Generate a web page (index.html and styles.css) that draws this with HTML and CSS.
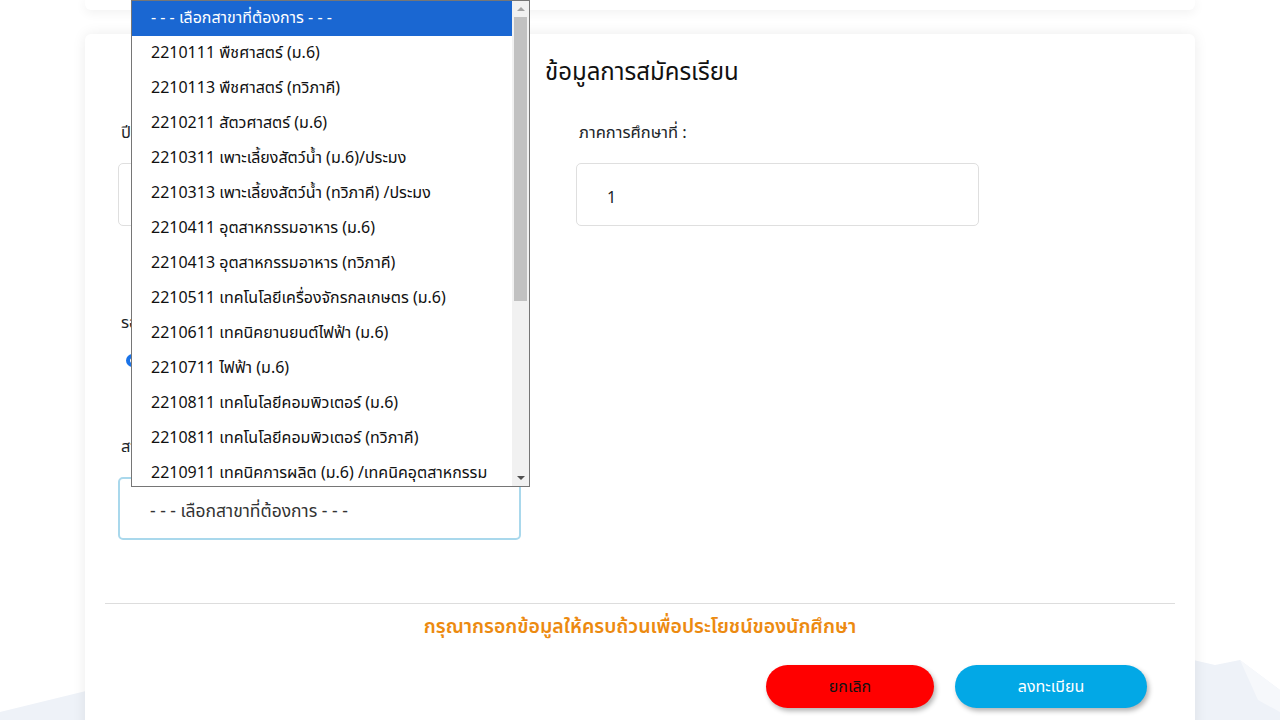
FILE: index.html
```html
<!DOCTYPE html>
<html lang="th">
<head>
<meta charset="utf-8">
<title>ข้อมูลการสมัครเรียน</title>
<link rel="stylesheet" href="styles.css">
</head>
<body>
<svg class="bg-mountains" width="1280" height="720" viewBox="0 0 1280 720" aria-hidden="true">
  <polygon points="0,720 0,712 90,690 160,680 160,720" fill="#eef2f8"/>
  <polygon points="1150,720 1150,650 1215,665 1240,660 1280,690 1280,720" fill="#eef2f8"/>
  <polygon points="1240,660 1258,700 1280,712 1280,690" fill="#f6f8fb"/>
</svg>
<div class="page">
  <div class="top-card"></div>
  <div class="card">
    <div class="cols">
      <div class="col col-left">
        <div class="heading-space"></div>
        <div class="field">
          <label class="label">ปีการศึกษา :</label>
          <div class="input"></div>
        </div>
        <div class="field field-round">
          <label class="label">รอบการสมัคร :</label>
          <div class="radio-row"><span class="radio"></span></div>
        </div>
        <div class="field field-major">
          <label class="label">สาขาวิชา :</label>
          <div class="input select-focus">- - - เลือกสาขาที่ต้องการ - - -</div>
        </div>
      </div>
      <div class="col col-right">
        <h2 class="heading">ข้อมูลการสมัครเรียน</h2>
        <div class="field field-indent">
          <label class="label">ภาคการศึกษาที่ :</label>
          <div class="input">1</div>
        </div>
      </div>
    </div>
    <hr class="divider">
    <p class="notice">กรุณากรอกข้อมูลให้ครบถ้วนเพื่อประโยชน์ของนักศึกษา</p>
    <div class="actions">
      <button class="btn btn-cancel">ยกเลิก</button>
      <button class="btn btn-submit">ลงทะเบียน</button>
    </div>
  </div>
</div>

<div class="dropdown">
  <ul class="options">
    <li class="opt selected">- - - เลือกสาขาที่ต้องการ - - -</li>
    <li class="opt">2210111 พืชศาสตร์ (ม.6)</li>
    <li class="opt">2210113 พืชศาสตร์ (ทวิภาคี)</li>
    <li class="opt">2210211 สัตวศาสตร์ (ม.6)</li>
    <li class="opt">2210311 เพาะเลี้ยงสัตว์น้ำ (ม.6)/ประมง</li>
    <li class="opt">2210313 เพาะเลี้ยงสัตว์น้ำ (ทวิภาคี) /ประมง</li>
    <li class="opt">2210411 อุตสาหกรรมอาหาร (ม.6)</li>
    <li class="opt">2210413 อุตสาหกรรมอาหาร (ทวิภาคี)</li>
    <li class="opt">2210511 เทคโนโลยีเครื่องจักรกลเกษตร (ม.6)</li>
    <li class="opt">2210611 เทคนิคยานยนต์ไฟฟ้า (ม.6)</li>
    <li class="opt">2210711 ไฟฟ้า (ม.6)</li>
    <li class="opt">2210811 เทคโนโลยีคอมพิวเตอร์ (ม.6)</li>
    <li class="opt">2210811 เทคโนโลยีคอมพิวเตอร์ (ทวิภาคี)</li>
    <li class="opt">2210911 เทคนิคการผลิต (ม.6) /เทคนิคอุตสาหกรรม</li>
  </ul>
  <div class="scrollbar">
    <span class="arrow arrow-up"></span>
    <span class="thumb"></span>
    <span class="arrow arrow-down"></span>
  </div>
</div>
</body>
</html>
```

FILE: styles.css
```css
* { box-sizing: border-box; }
html, body { margin: 0; padding: 0; }
body {
  width: 1280px;
  height: 720px;
  overflow: hidden;
  position: relative;
  background: #ffffff;
  font-family: "Noto Sans Thai", "Noto Sans", "DejaVu Sans", sans-serif;
  color: #212529;
}
.bg-mountains {
  position: absolute;
  left: 0;
  top: 0;
  z-index: 0;
}
.page {
  position: relative;
  z-index: 1;
  width: 1110px;
  margin: 0 auto;
}
.top-card {
  height: 10px;
  background: #fff;
  border-radius: 0 0 6px 6px;
  box-shadow: 0 2px 12px rgba(0,0,0,0.07);
}
.card {
  margin-top: 24px;
  height: 720px;
  background: #fff;
  border-radius: 6px;
  box-shadow: 0 0 14px rgba(0,0,0,0.08);
  padding: 0 20px;
}
.cols {
  display: flex;
}
.col-left { width: 440px; padding-left: 13px; }
.col-right { flex: 1; }
.heading-space { height: 88px; }
.heading {
  margin: 0;
  padding-top: 21px;
  height: 88px;
  font-size: 24px;
  font-weight: 400;
  line-height: 36px;
  color: #111;
}
.label {
  display: block;
  font-size: 16.5px;
  line-height: 22px;
  margin-left: 3px;
  color: #212529;
}
.field-indent { padding-left: 31px; }
.input {
  margin-top: 19px;
  width: 403px;
  height: 63px;
  border: 1px solid #dfdfdf;
  border-radius: 5px;
  padding: 6px 30px 0;
  display: flex;
  align-items: center;
  font-size: 16px;
  color: #212529;
}
.field-round { margin-top: 86px; }
.radio-row {
  display: flex;
  align-items: center;
  margin-top: 18px;
  margin-left: 8px;
  height: 16px;
}
.radio {
  width: 13px;
  height: 13px;
  border-radius: 50%;
  border: 4px solid #1a73e8;
}
.field-major { margin-top: 68px; }
.select-focus {
  border-color: #a9d8ec;
  border-width: 2px;
  color: #333;
  font-size: 17.5px;
}
.divider {
  margin: 63px 0 0 0;
  border: 0;
  border-top: 1px solid #dddddd;
}
.notice {
  margin: 10px 0 0 0;
  text-align: center;
  font-size: 19.5px;
  font-weight: 600;
  line-height: 26px;
  color: #ec8a10;
}
.actions {
  display: flex;
  justify-content: flex-end;
  gap: 21px;
  margin-top: 25px;
  padding-right: 28px;
}
.btn {
  height: 43px;
  border: 0;
  border-radius: 22px;
  font-family: inherit;
  font-size: 16px;
  box-shadow: 2px 3px 5px rgba(0,0,0,0.3);
}
.btn-cancel { width: 168px; background: #ff0000; color: #111; }
.btn-submit { width: 192px; background: #02a8e6; color: #fff; }

.dropdown {
  position: absolute;
  z-index: 10;
  left: 131px;
  top: 0;
  width: 399px;
  height: 487px;
  background: #fff;
  border: 1px solid #767676;
  display: flex;
  overflow: hidden;
}
.options {
  list-style: none;
  margin: 0;
  padding: 0;
  flex: 1;
}
.opt {
  height: 35px;
  line-height: 35px;
  padding-left: 19px;
  font-size: 16px;
  color: #111;
  white-space: nowrap;
}
.opt.selected {
  background: #1a67d2;
  color: #fff;
}
.scrollbar {
  width: 17px;
  background: #f1f1f1;
  position: relative;
  display: flex;
  flex-direction: column;
  align-items: center;
}
.arrow {
  width: 0;
  height: 0;
  border-left: 4px solid transparent;
  border-right: 4px solid transparent;
  margin: 6px 0;
}
.arrow-up { border-bottom: 4px solid #a3a3a3; }
.arrow-down { border-top: 4px solid #505050; margin-top: auto; }
.thumb {
  width: 13px;
  height: 284px;
  background: #c1c1c1;
}
```
